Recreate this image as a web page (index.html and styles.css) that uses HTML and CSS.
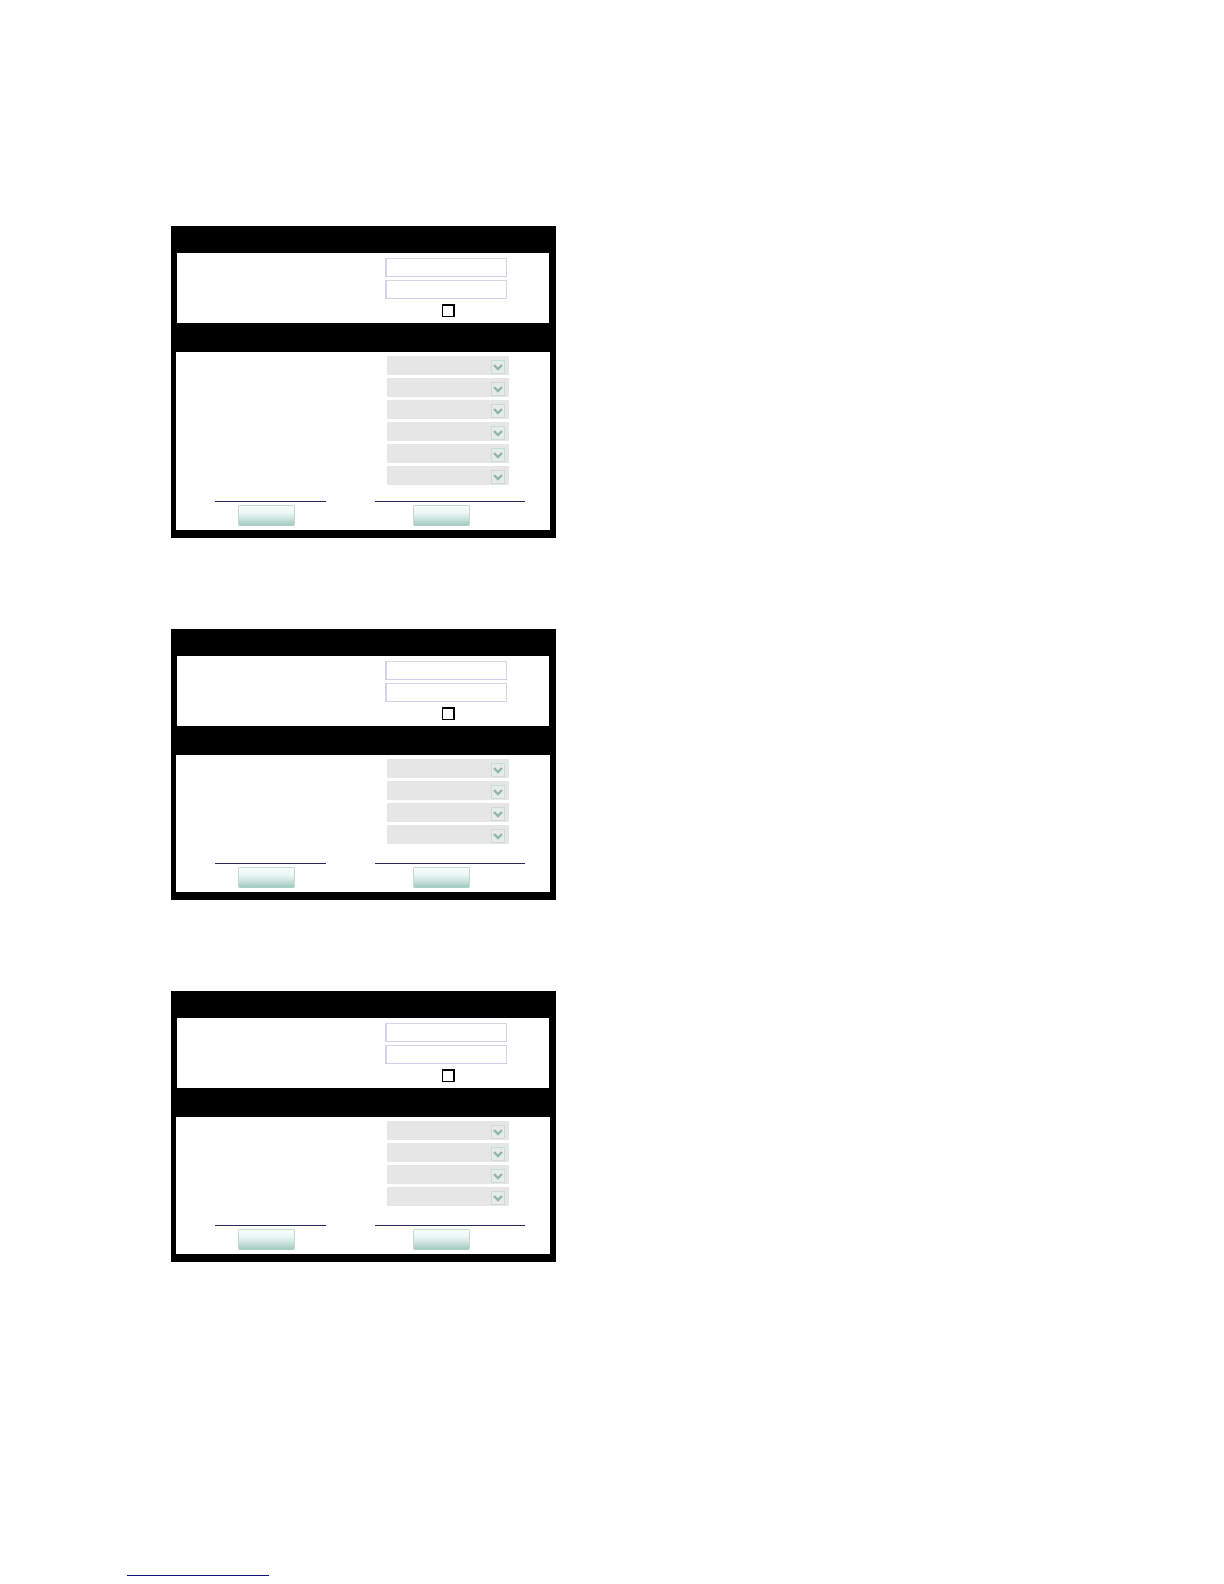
FILE: index.html
```
<!DOCTYPE html>
<html lang="en">
<head>
    <meta charset="utf-8">
    <title>Settings</title>
    <link rel="stylesheet" href="styles.css">
</head>
<body>
    <svg class="sprite" aria-hidden="true">
        <symbol id="arrow" viewBox="0 0 14 14">
            <rect x="0.5" y="0.5" width="13" height="13" fill="#e4ebe8" stroke="#c9ddd6"/>
            <path d="M3 5 L7 9 L11 5" fill="none" stroke="#92b5aa" stroke-width="2.4"/>
        </symbol>
    </svg>

    <main class="page">
        <form class="panel">
            <div class="section general">
                <input class="text-field" type="text" aria-label="Name">
                <input class="text-field" type="text" aria-label="Value">
                <input class="tick" type="checkbox" aria-label="Enable">
            </div>
            <div class="section options">
                <div class="selects">
                    <div class="select"><select disabled aria-label="Option 1"></select><svg><use href="#arrow"/></svg></div>
                    <div class="select"><select disabled aria-label="Option 2"></select><svg><use href="#arrow"/></svg></div>
                    <div class="select"><select disabled aria-label="Option 3"></select><svg><use href="#arrow"/></svg></div>
                    <div class="select"><select disabled aria-label="Option 4"></select><svg><use href="#arrow"/></svg></div>
                    <div class="select"><select disabled aria-label="Option 5"></select><svg><use href="#arrow"/></svg></div>
                    <div class="select"><select disabled aria-label="Option 6"></select><svg><use href="#arrow"/></svg></div>
                </div>
                <div class="actions">
                    <a href="#" aria-label="Apply"></a>
                    <a href="#" aria-label="Cancel"></a>
                    <button class="first" type="button" aria-label="Apply"></button>
                    <button class="second" type="button" aria-label="Cancel"></button>
                </div>
            </div>
        </form>

        <form class="panel short">
            <div class="section general">
                <input class="text-field" type="text" aria-label="Name">
                <input class="text-field" type="text" aria-label="Value">
                <input class="tick" type="checkbox" aria-label="Enable">
            </div>
            <div class="section options">
                <div class="selects">
                    <div class="select"><select disabled aria-label="Option 1"></select><svg><use href="#arrow"/></svg></div>
                    <div class="select"><select disabled aria-label="Option 2"></select><svg><use href="#arrow"/></svg></div>
                    <div class="select"><select disabled aria-label="Option 3"></select><svg><use href="#arrow"/></svg></div>
                    <div class="select"><select disabled aria-label="Option 4"></select><svg><use href="#arrow"/></svg></div>
                </div>
                <div class="actions">
                    <a href="#" aria-label="Apply"></a>
                    <a href="#" aria-label="Cancel"></a>
                    <button class="first" type="button" aria-label="Apply"></button>
                    <button class="second" type="button" aria-label="Cancel"></button>
                </div>
            </div>
        </form>

        <form class="panel short">
            <div class="section general">
                <input class="text-field" type="text" aria-label="Name">
                <input class="text-field" type="text" aria-label="Value">
                <input class="tick" type="checkbox" aria-label="Enable">
            </div>
            <div class="section options">
                <div class="selects">
                    <div class="select"><select disabled aria-label="Option 1"></select><svg><use href="#arrow"/></svg></div>
                    <div class="select"><select disabled aria-label="Option 2"></select><svg><use href="#arrow"/></svg></div>
                    <div class="select"><select disabled aria-label="Option 3"></select><svg><use href="#arrow"/></svg></div>
                    <div class="select"><select disabled aria-label="Option 4"></select><svg><use href="#arrow"/></svg></div>
                </div>
                <div class="actions">
                    <a href="#" aria-label="Apply"></a>
                    <a href="#" aria-label="Cancel"></a>
                    <button class="first" type="button" aria-label="Apply"></button>
                    <button class="second" type="button" aria-label="Cancel"></button>
                </div>
            </div>
        </form>
    </main>

    <footer class="footer">
        <a href="#" aria-label="Contents"></a>
    </footer>
</body>
</html>
```
FILE: styles.css
```
* {
    box-sizing: border-box;
}
body {
    margin: 0;
    background: white;
    font-family: "Liberation Sans", Arial, sans-serif;
    font-size: 12px;
}
.sprite {
    display: none;
}
.page {
    display: flex;
    flex-direction: column;
    gap: 91px;
    padding: 226px 171px 0;
}
.panel {
    display: flex;
    flex-direction: column;
    gap: 29px;
    width: 100%;
    max-width: 385px;
    padding: 27px 6px 8px 5px;
    background: black;
}
.section {
    background: white;
}
.general {
    display: flex;
    flex-direction: column;
    align-items: flex-end;
    gap: 3px;
    margin: 0 1px;
    padding: 5px 42px 6px 0;
}
.text-field {
    width: 122px;
    height: 19px;
    margin: 0;
    padding: 0 4px;
    border: 1px solid #d5d5e4;
    border-left: 2px solid #d3d3e9;
    border-bottom-color: #cfcfeb;
    background: white;
}
.tick {
    appearance: none;
    width: 13px;
    height: 13px;
    margin: 2px 52px 0 0;
    border: 1px solid black;
    border-top-width: 2px;
    border-right-width: 2px;
}
.options {
    padding: 4px 0;
}
.selects {
    display: flex;
    flex-direction: column;
    align-items: flex-end;
    gap: 3px;
    padding-right: 41px;
}
.select {
    position: relative;
    width: 122px;
    height: 19px;
}
.select select {
    appearance: none;
    display: block;
    width: 100%;
    height: 100%;
    margin: 0;
    border: none;
    border-radius: 0;
    background: #e6e6e6;
    opacity: 1;
}
.select svg {
    position: absolute;
    top: 4px;
    right: 4px;
    width: 14px;
    height: 14px;
    pointer-events: none;
}

/* underlined links with a button below each */
.actions {
    display: grid;
    grid-template-columns: 111px 150px;
    column-gap: 49px;
    row-gap: 3px;
    margin-top: 16px;
    padding-left: 39px;
}
.short .actions {
    margin-top: 19px;
}
.actions a {
    height: 1px;
    background: #29295c;
}
.actions button {
    width: 57px;
    height: 21px;
    padding: 0;
    border: 1px solid #c3d9d3;
    border-bottom-color: #a9cec4;
    border-radius: 2px;
    background: linear-gradient(#f8fdfc 0%, #edf7f5 35%, #cfe5df 65%, #a3cbc1 100%);
}
.first {
    margin: 0 0 0 23px;
}
.second {
    margin: 0 0 0 38px;
}
.footer {
    padding: 293px 127px 8px;
}
.footer a {
    display: block;
    width: 142px;
    height: 21px;
    border-bottom: 1px solid #10107c;
}
```
